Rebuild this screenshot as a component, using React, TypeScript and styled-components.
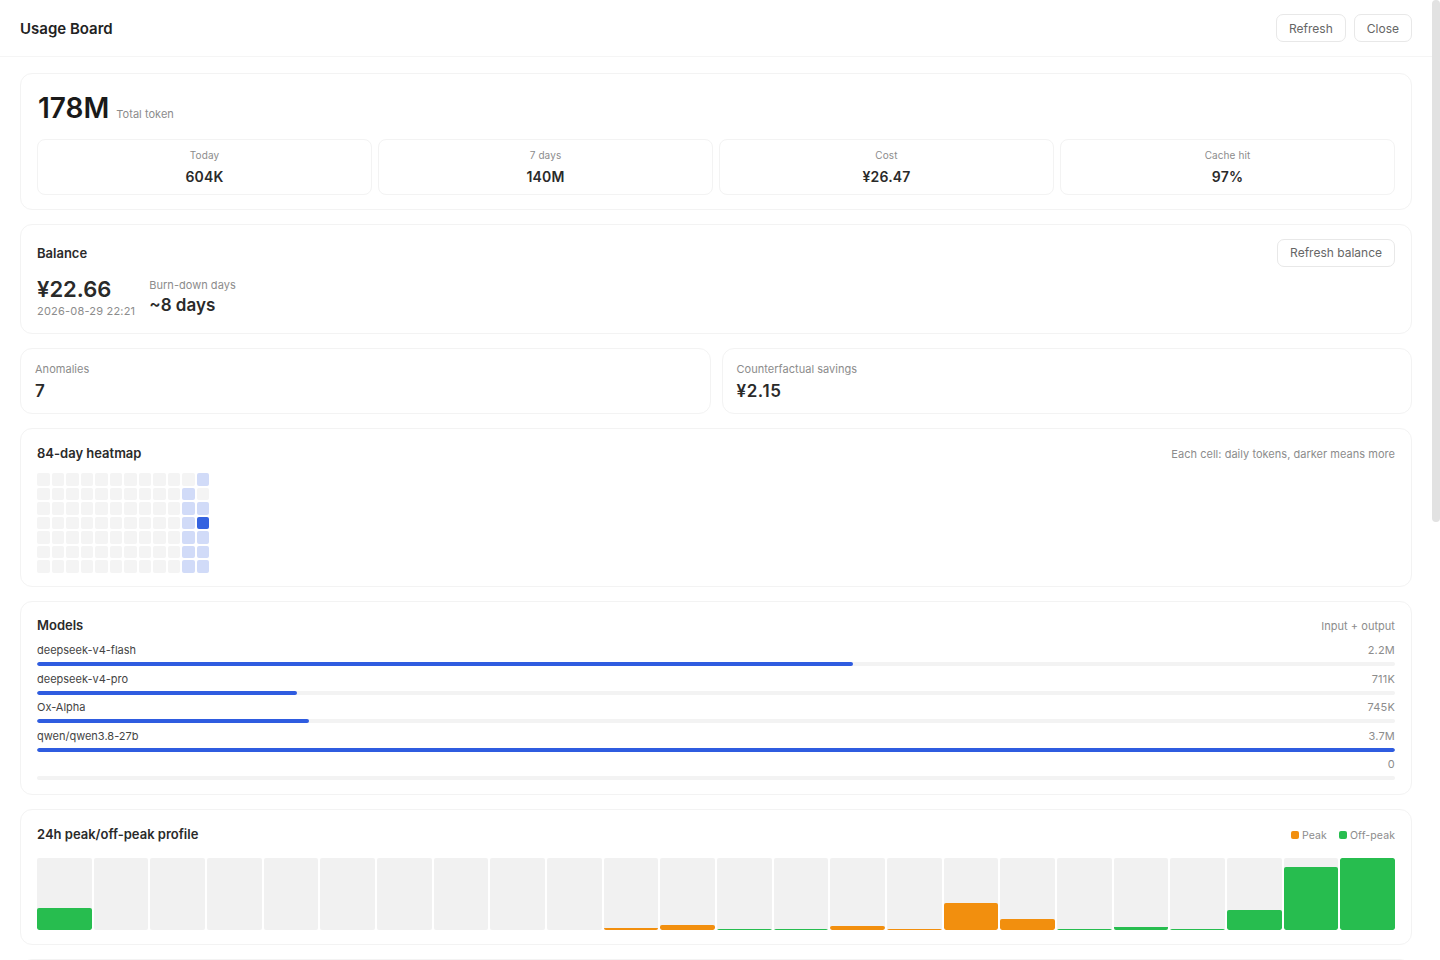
import styled, { createGlobalStyle } from "styled-components";

const GlobalStyle = createGlobalStyle`
  html, body {
    margin: 0;
    height: 100%;
    overflow: hidden;
    background: #fff;
    font-family: Inter, "Noto Sans", sans-serif;
    color: #1f1f1f;
  }
`;

const Shell = styled.div`
  display: flex;
  height: 100vh;
`;

const Page = styled.div`
  flex: 1;
  min-width: 0;
  overflow: hidden;
`;

const ScrollRail = styled.div`
  width: 8px;
  flex: none;
`;

const ScrollThumb = styled.div`
  height: 522px;
  border-radius: 4px;
  background: #e2e2e2;
`;

const Header = styled.header`
  display: flex;
  align-items: center;
  justify-content: space-between;
  height: 57px;
  box-sizing: border-box;
  padding: 0 20px;
  border-bottom: 1px solid #f5f5f5;
`;

const Title = styled.h1`
  margin: 0;
  font-size: 15px;
  font-weight: 600;
  color: #222;
`;

const HeaderActions = styled.div`
  display: flex;
  gap: 8px;
`;

const Button = styled.button`
  height: 28px;
  padding: 0 12px;
  background: #fff;
  border: 1px solid #e8e8e8;
  border-radius: 7px;
  font-family: inherit;
  font-size: 12px;
  color: #666;
`;

const Content = styled.main`
  display: flex;
  flex-direction: column;
  gap: 14px;
  padding: 16px 20px 20px;
`;

const Card = styled.section<{ $height?: number }>`
  box-sizing: border-box;
  padding: 15px 16px;
  border: 1px solid #f3f3f3;
  border-radius: 12px;
  background: #fff;
  ${({ $height }) => ($height ? `height: ${$height}px;` : "")}
`;

const TotalCard = styled(Card)`
  padding: 16px 16px 14px;
`;

const TotalRow = styled.div`
  display: flex;
  align-items: baseline;
  gap: 7px;
  height: 49px;
  padding-left: 1px;
  box-sizing: border-box;
`;

const TotalValue = styled.span`
  font-size: 28px;
  font-weight: 600;
  line-height: 36px;
  color: #1a1a1a;
`;

const Muted = styled.span`
  font-size: 11px;
  letter-spacing: 0.03px;
  color: #8c8c8c;
`;

const HeadNote = styled(Muted)`
  margin-top: 2px;
`;

const StatGrid = styled.div`
  display: grid;
  grid-template-columns: repeat(4, 1fr);
  gap: 6px;
`;

const StatCard = styled.div`
  display: flex;
  flex-direction: column;
  align-items: center;
  height: 56px;
  box-sizing: border-box;
  padding-top: 9px;
  border: 1px solid #f3f3f3;
  border-radius: 8px;
`;

const StatLabel = styled.span`
  font-size: 10px;
  letter-spacing: 0.1px;
  line-height: 12px;
  color: #8c8c8c;
`;

const StatValue = styled.span`
  margin-top: 6px;
  font-size: 14px;
  font-weight: 600;
  letter-spacing: 0.2px;
  line-height: 20px;
  color: #2a2a2a;
`;

const CardHead = styled.div`
  display: flex;
  align-items: center;
  justify-content: space-between;
`;

const CardTitle = styled.h2`
  margin: 0;
  font-size: 13px;
  font-weight: 600;
  line-height: 18px;
  color: #2a2a2a;
`;

const BalanceHead = styled(CardHead)`
  margin-top: -2px;
  height: 29px;
`;

const BalanceRow = styled.div`
  display: flex;
  gap: 14px;
  margin-top: 8px;
`;

const BalanceColumn = styled.div`
  display: flex;
  flex-direction: column;
`;

const BurnColumn = styled(BalanceColumn)`
  padding-top: 2px;
`;

const BalanceValue = styled.span`
  font-size: 22px;
  font-weight: 600;
  line-height: 28px;
  color: #2a2a2a;
`;

const BalanceDate = styled(Muted)`
  line-height: 16px;
  letter-spacing: 0.2px;
`;

const BurnLabel = styled(Muted)`
  line-height: 16px;
`;

const BurnValue = styled.span`
  margin-top: 1px;
  font-size: 17px;
  font-weight: 600;
  line-height: 22px;
  color: #2a2a2a;
`;

const TwoColumns = styled.div`
  display: grid;
  grid-template-columns: 1fr 1fr;
  gap: 11px;
`;

const SummaryCard = styled(Card)`
  display: flex;
  flex-direction: column;
  height: 66px;
  padding: 13px 14px 0;
`;

const SummaryValue = styled.span`
  margin-top: 4px;
  font-size: 17px;
  font-weight: 600;
  letter-spacing: 0.6px;
  line-height: 22px;
  color: #2a2a2a;
`;

const Heatmap = styled.div`
  display: grid;
  grid-template-columns: repeat(12, 12.5px);
  grid-auto-rows: 12.5px;
  gap: 2px;
  margin-top: 11px;
`;

const HeatCell = styled.div<{ $level: number }>`
  border-radius: 2px;
  background: ${({ $level }) =>
    $level === 2 ? "#3563e0" : $level === 1 ? "#d1dbf8" : "#f4f4f4"};
`;

const ModelsCard = styled(Card)`
  padding-top: 14px;
`;

const ModelList = styled.div`
  display: flex;
  flex-direction: column;
  margin-top: 8px;
`;

const ModelRow = styled.div`
  height: 28.6px;
`;

const ModelLine = styled.div`
  display: flex;
  justify-content: space-between;
  font-size: 11px;
  line-height: 16px;
  color: #444;
  min-height: 16px;
`;

const ModelAmount = styled.span`
  letter-spacing: 0.2px;
  color: #8c8c8c;
`;

const Track = styled.div`
  height: 4px;
  margin-top: 4px;
  border-radius: 2px;
  background: #f3f3f3;
  overflow: hidden;
`;

const Fill = styled.div`
  height: 100%;
  border-radius: 2px;
  background: #2f5ce0;
`;

const Legend = styled.div`
  display: flex;
  gap: 12px;
  margin-top: 2px;
  font-size: 10.5px;
  letter-spacing: 0.1px;
  color: #8c8c8c;
`;

const LegendItem = styled.span`
  display: inline-flex;
  align-items: center;
  gap: 3px;
`;

const Swatch = styled.i<{ $peak: boolean }>`
  width: 8px;
  height: 8px;
  border-radius: 2px;
  background: ${({ $peak }) => ($peak ? "#f28f0e" : "#27bd4f")};
`;

const Bars = styled.div`
  display: grid;
  grid-template-columns: repeat(24, 1fr);
  gap: 2px;
  height: 72px;
  margin-top: 15px;
`;

const BarSlot = styled.div`
  display: flex;
  align-items: flex-end;
  border-radius: 2px;
  background: #f1f1f1;
  overflow: hidden;
`;

const BarFill = styled.div<{ $peak: boolean; $thin: boolean }>`
  width: 100%;
  border-radius: ${({ $thin }) => ($thin ? "0" : "2px")};
  background: ${({ $peak }) => ($peak ? "#f28f0e" : "#27bd4f")};
`;

const stats = [
  { label: "Today", value: "604K" },
  { label: "7 days", value: "140M" },
  { label: "Cost", value: "¥26.47" },
  { label: "Cache hit", value: "97%" },
];

// last two columns carry the only activity, everything else is empty
const heatColumn11 = [0, 1, 1, 1, 1, 1, 1];
const heatColumn12 = [1, 0, 1, 2, 1, 1, 1];

const models = [
  { name: "deepseek-v4-flash", amount: "2.2M", share: 60.1 },
  { name: "deepseek-v4-pro", amount: "711K", share: 19.15 },
  { name: "Ox-Alpha", amount: "745K", share: 20.03 },
  { name: "qwen/qwen3.8-27b", amount: "3.7M", share: 100 },
  { name: "", amount: "0", share: 0 },
];

const hours = [
  { h: 22, peak: false }, { h: 0, peak: false }, { h: 0, peak: false }, { h: 0, peak: false },
  { h: 0, peak: false }, { h: 0, peak: false }, { h: 0, peak: false }, { h: 0, peak: false },
  { h: 0, peak: false }, { h: 0, peak: false }, { h: 2, peak: true }, { h: 5, peak: true },
  { h: 1, peak: false }, { h: 1, peak: false }, { h: 4, peak: true }, { h: 1, peak: true },
  { h: 27, peak: true }, { h: 11, peak: true }, { h: 1, peak: false }, { h: 3, peak: false },
  { h: 1, peak: false }, { h: 20, peak: false }, { h: 63, peak: false }, { h: 72, peak: false },
];

function heatLevel(row: number, col: number): number {
  if (col === 10) return heatColumn11[row];
  if (col === 11) return heatColumn12[row];
  return 0;
}

export default function App() {
  return (
    <Shell>
      <GlobalStyle />
      <Page>
        <Header>
          <Title>Usage Board</Title>
          <HeaderActions>
            <Button>Refresh</Button>
            <Button>Close</Button>
          </HeaderActions>
        </Header>
        <Content>
          <TotalCard>
            <TotalRow>
              <TotalValue>178M</TotalValue>
              <Muted>Total token</Muted>
            </TotalRow>
            <StatGrid>
              {stats.map((s) => (
                <StatCard key={s.label}>
                  <StatLabel>{s.label}</StatLabel>
                  <StatValue>{s.value}</StatValue>
                </StatCard>
              ))}
            </StatGrid>
          </TotalCard>

          <Card $height={110}>
            <BalanceHead>
              <CardTitle>Balance</CardTitle>
              <Button>Refresh balance</Button>
            </BalanceHead>
            <BalanceRow>
              <BalanceColumn>
                <BalanceValue>¥22.66</BalanceValue>
                <BalanceDate>2026-08-29 22:21</BalanceDate>
              </BalanceColumn>
              <BurnColumn>
                <BurnLabel>Burn-down days</BurnLabel>
                <BurnValue>~8 days</BurnValue>
              </BurnColumn>
            </BalanceRow>
          </Card>

          <TwoColumns>
            <SummaryCard>
              <Muted>Anomalies</Muted>
              <SummaryValue>7</SummaryValue>
            </SummaryCard>
            <SummaryCard>
              <Muted>Counterfactual savings</Muted>
              <SummaryValue>¥2.15</SummaryValue>
            </SummaryCard>
          </TwoColumns>

          <Card $height={159}>
            <CardHead>
              <CardTitle>84-day heatmap</CardTitle>
              <HeadNote>Each cell: daily tokens, darker means more</HeadNote>
            </CardHead>
            <Heatmap>
              {Array.from({ length: 7 }).flatMap((_, row) =>
                Array.from({ length: 12 }).map((_, col) => (
                  <HeatCell key={`${row}-${col}`} $level={heatLevel(row, col)} />
                )),
              )}
            </Heatmap>
          </Card>

          <ModelsCard $height={194}>
            <CardHead>
              <CardTitle>Models</CardTitle>
              <HeadNote>Input + output</HeadNote>
            </CardHead>
            <ModelList>
              {models.map((m) => (
                <ModelRow key={m.amount}>
                  <ModelLine>
                    <span>{m.name}</span>
                    <ModelAmount>{m.amount}</ModelAmount>
                  </ModelLine>
                  <Track>
                    <Fill style={{ width: `${m.share}%` }} />
                  </Track>
                </ModelRow>
              ))}
            </ModelList>
          </ModelsCard>

          <Card $height={136}>
            <CardHead>
              <CardTitle>24h peak/off-peak profile</CardTitle>
              <Legend>
                <LegendItem>
                  <Swatch $peak />
                  Peak
                </LegendItem>
                <LegendItem>
                  <Swatch $peak={false} />
                  Off-peak
                </LegendItem>
              </Legend>
            </CardHead>
            <Bars>
              {hours.map((b, i) => (
                <BarSlot key={i}>
                  <BarFill $peak={b.peak} $thin={b.h < 4} style={{ height: b.h }} />
                </BarSlot>
              ))}
            </Bars>
          </Card>

          <Card $height={200} />
        </Content>
      </Page>
      <ScrollRail>
        <ScrollThumb />
      </ScrollRail>
    </Shell>
  );
}
